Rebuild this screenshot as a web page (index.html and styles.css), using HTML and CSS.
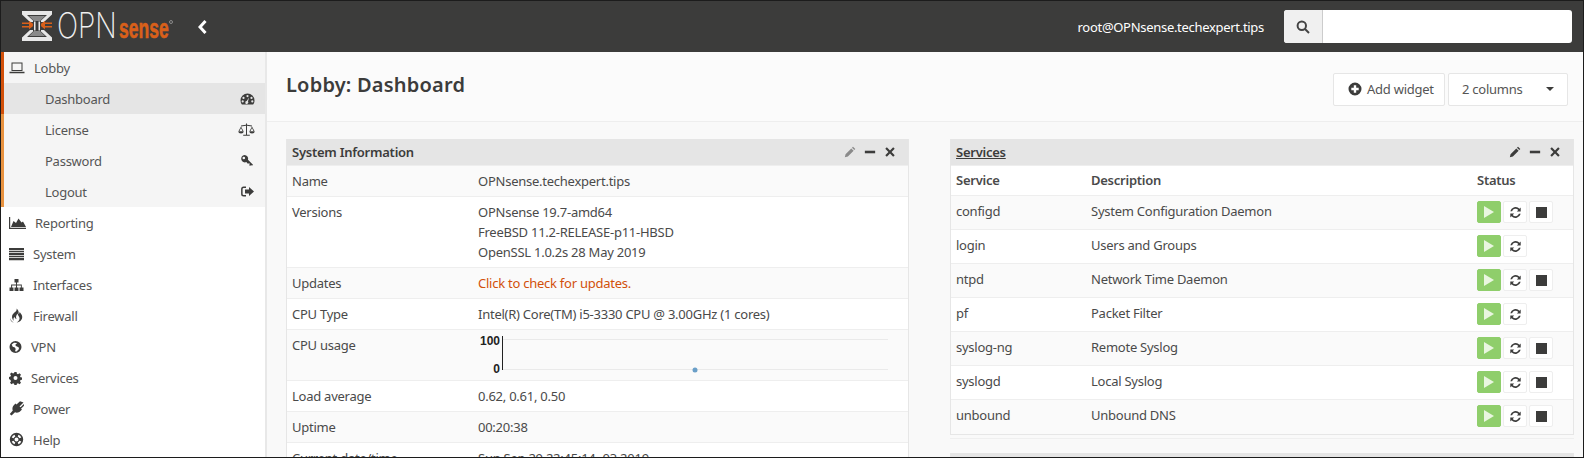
FILE: index.html
```html
<!DOCTYPE html>
<html lang="en">
<head>
<meta charset="utf-8">
<title>Lobby: Dashboard | OPNsense</title>
<link rel="stylesheet" href="styles.css">
</head>
<body>
<svg class="defs" width="0" height="0" aria-hidden="true">
  <defs>
    <symbol id="i-refresh" viewBox="0 0 14 14"><path d="M12.6 1.6v4.2H8.4l1.6-1.6A4 4 0 0 0 3.3 5.6H1.4A5.9 5.9 0 0 1 11.300 2.900zM1.400 12.400V8.200h4.200L4 9.800a4 4 0 0 0 6.700-1.400h1.900a5.900 5.900 0 0 1-9.900 2.700z"/></symbol>
    <symbol id="i-pencil" viewBox="0 0 14 14"><path d="M1 13l.8-3.500 6.700-6.700 2.700 2.700-6.700 6.700zM9.300 2l1.200-1.200 2.700 2.700L12 4.700z"/></symbol>
    <symbol id="i-minus" viewBox="0 0 14 14"><rect x="1" y="5.500" width="12" height="3"/></symbol>
    <symbol id="i-times" viewBox="0 0 14 14"><path d="M3.300 1.500L7 5.200l3.700-3.700 1.800 1.800L8.800 7l3.700 3.700-1.800 1.800L7 8.800l-3.700 3.700-1.800-1.800L5.200 7 1.500 3.300z"/></symbol>
  </defs>
</svg>
<div class="app">
  <header class="navbar">
    <a class="brand" href="#">
      <svg class="logo" width="154" height="44" viewBox="0 0 154 44">
        <path class="logo-w" d="M1 6h30v3.500L23 17h-3v-1.500l6-5.500H6l6 5.500V17H9L1 9.500zM1 36h30v-3.500L23 25h-3v1.500l6 5.500H6l6-5.500V25H9L1 32.500z"/>
        <path class="logo-g" d="M8 11h16l-5 5h-6zM8 31h16l-5-5h-6z"/>
        <path class="logo-w" d="M13 16.500h1.500v9H13zM17.500 16.500H19v9h-1.500z"/>
        <path class="logo-o" d="M1 17.500h7v-1.800l4 3-.1 2.600-3.900 3v-1.800H1v-1.500h7v-2H1zM31 17.500h-7v-1.800l-4 3 .1 2.600 3.900 3v-1.800h7v-1.500h-7v-2h7z"/>
        <text class="logo-opn" transform="translate(36 33) scale(.8 1)">OPN</text>
        <text class="logo-sense" transform="translate(98 33) scale(.65 1)">sense</text>
        <circle class="logo-tm" cx="150" cy="17" r="1.500"/>
      </svg>
    </a>
    <svg class="collapse" width="10" height="14" viewBox="0 0 10 14"><path d="M7.500 1L2 7l5.500 6" /></svg>
    <div class="nav-right">
      <span class="user">root@OPNsense.techexpert.tips</span>
      <div class="search">
        <span class="search-addon"><svg width="14" height="14" viewBox="0 0 14 14"><circle cx="5.800" cy="5.800" r="4.200"/><path d="M9 9l4 4"/></svg></span>
        <span class="search-field"></span>
      </div>
    </div>
  </header>
  <div class="layout">
    <nav class="sidebar">
      <div class="group">
        <a class="item top lobby"><svg class="ic" width="16" height="14" viewBox="0 0 16 14"><path d="M2.500 1.500h11v8.500h-11zM3.500 2.500v6.500h9V2.500zM.5 10.800h15V12.300H.5z" fill-rule="evenodd"/></svg>Lobby</a>
        <a class="item sub active">Dashboard<svg class="ic-r" width="15" height="14" viewBox="0 0 15 14"><path fill-rule="evenodd" d="M7.500 1.500a7 7 0 0 1 7 7c0 1.600-.5 3-1.400 4H1.900a6.900 6.900 0 0 1-1.400-4 7 7 0 0 1 7-7zM7.500 3a1.100 1.100 0 1 0 0 2.200 1.100 1.100 0 0 0 0-2.200zM3.500 4.800a1.100 1.100 0 1 0 0 2.200 1.100 1.100 0 0 0 0-2.200zM11.500 4.800a1.100 1.100 0 1 0 0 2.200 1.100 1.100 0 0 0 0-2.200zM2.700 8.300a1.100 1.100 0 1 0 0 2.200 1.100 1.100 0 0 0 0-2.200zM12.300 8.300a1.100 1.100 0 1 0 0 2.200 1.100 1.100 0 0 0 0-2.200zM9 5.500L6.700 9a1.500 1.500 0 1 0 1.300.6z"/></svg></a>
        <a class="item sub">License<svg class="ic-r" width="17" height="14" viewBox="0 0 17 14"><path d="M8 .5h1v1.300l5 .8v.8l-5-.7v9h2.800v1H5.200v-1H8v-9l-5 .7v-.8l5-.8z"/><path d="M3 3.500L.3 8.500h5.400zM3 5.100l-1.500 2.900h3zM14 3.500l-2.700 5h5.400zM14 5.100l-1.500 2.900h3z" fill-rule="evenodd"/><path d="M.3 8.500a2.700 2 0 0 0 5.400 0zM11.300 8.500a2.700 2 0 0 0 5.400 0z"/></svg></a>
        <a class="item sub">Password<svg class="ic-r short" width="14" height="14" viewBox="0 0 14 14"><path fill-rule="evenodd" d="M4.500 1a3.700 3.700 0 0 1 3.500 4.800l5 5-1 1-1-.8-.9.900-1-1 .8-.8-1-1-.8.800-1.800-1.800A3.700 3.700 0 1 1 4.500 1zM3.800 2.700a1.300 1.300 0 1 0 0 2.600 1.300 1.300 0 0 0 0-2.600z"/></svg></a>
        <a class="item sub">Logout<svg class="ic-r short" width="13" height="13" viewBox="0 0 13 13"><path d="M5 1.500v1.500H2.600a1 1 0 0 0-1 1v5a1 1 0 0 0 1 1H5v1.500H2.600A2.500 2.500 0 0 1 .1 9V4a2.500 2.500 0 0 1 2.500-2.500zM8 2l5 4.500L8 11V8.500H4v-4h4z"/></svg></a>
      </div>
      <a class="item top"><svg class="ic" width="17" height="14" viewBox="0 0 17 14"><path d="M0 1h1.200v10.800H17V13H0z"/><path d="M2 11l2.500-6 2.500 2 2.500-4.500 3 4 1.500-1 3 5.500z"/></svg>Reporting</a>
      <a class="item top"><svg class="ic" width="15" height="14" viewBox="0 0 15 14"><path d="M0 1h15v2.200H0zM0 4h15v1.200H0zM0 6h15v2.200H0zM0 9h15v1.200H0zM0 11h15v2.200H0z"/></svg>System</a>
      <a class="item top"><svg class="ic" width="15" height="14" viewBox="0 0 15 14"><path d="M5.500 1h4v3.500H8V6.500h4.800v3h1.700V13h-4V9.500h1.400V7.500H8V9.500h1.500V13h-4V9.500H7V7.500H3.100v2h1.400V13h-4V9.500h1.600v-3H7V4.500H5.500z"/></svg>Interfaces</a>
      <a class="item top"><svg class="ic" width="15" height="15" viewBox="0 0 15 15"><path d="M7.500.5C8.500 3 5 4.500 3.800 6.300 2.500 8.200 2.800 11 4.800 13c-.6-1.500-.5-3 .7-4.200.2 1.500 1 2 2 2.200C6.600 9 7 7 8.800 5.400 8.500 7.500 11 8.500 10.500 11c-.3 1.400-1.300 2.500-2.800 3.500 3.500-.5 5.800-3 5.500-6-.2-2-1.800-3.500-2.700-4.500.1 1-.2 1.800-1 2.300C10 4 9.500 2 7.500.5zM1 10c.2 2.200 1.500 4 3.800 4.800C3 13.500 1.800 12 1 10z"/></svg>Firewall</a>
      <a class="item top"><svg class="ic" width="13" height="14" viewBox="0 0 13 14"><path d="M6.500 1a6 6 0 1 1 0 12 6 6 0 0 1 0-12zM5 2.700L2.700 4.500l1 2.300 2.200.7.800 1.500-.7 2.300 1.500.3 2.500-2.600-.4-1.700-2.700-1.200-.6-1.400 1.200-.9L8 2.900z" fill-rule="evenodd"/></svg>VPN</a>
      <a class="item top"><svg class="ic" width="13" height="14" viewBox="0 0 13 14"><path fill-rule="evenodd" d="M5.400 1h2.200l.3 1.700 1.100.5 1.500-1 1.500 1.500-1 1.500.5 1.100 1.500.3v2.200l-1.500.3-.5 1.100 1 1.500-1.500 1.500-1.500-1-1.100.5-.3 1.500H5.400l-.3-1.500-1.100-.5-1.500 1-1.500-1.500 1-1.500-.5-1.100L0 8.100V5.900l1.500-.3.500-1.100-1-1.500 1.500-1.500 1.500 1 1.100-.5zM6.500 5a2 2 0 1 0 0 4 2 2 0 0 0 0-4z"/></svg>Services</a>
      <a class="item top"><svg class="ic" width="15" height="15" viewBox="0 0 15 15"><path d="M14.500 1.500L10.500 5.400l1.100.9L14.800 3l.2 1.700-3 3 1 .9-1.500 1.500c-1.500 1.600-3.800 2-5.500 1.200L2.500 14.500.8 13l3-3.500C3 7.800 3.400 5.500 5 4l1.500-1.500 1 1L11 .2z"/></svg>Power</a>
      <a class="item top"><svg class="ic" width="15" height="15" viewBox="0 0 15 15"><path fill-rule="evenodd" d="M7.500.8a6.700 6.700 0 1 1 0 13.400 6.700 6.700 0 0 1 0-13.400zM5.500 2.700A5.300 5.300 0 0 0 2.700 5.500l1.900.8a3.200 3.200 0 0 1 1.700-1.700zM9.500 2.700l-.8 1.900a3.200 3.200 0 0 1 1.700 1.700l1.900-.8a5.300 5.300 0 0 0-2.800-2.800zM7.500 5.500a2 2 0 1 0 0 4 2 2 0 0 0 0-4zM2.700 9.500a5.300 5.300 0 0 0 2.800 2.800l.8-1.900a3.200 3.200 0 0 1-1.700-1.700zM12.300 9.500l-1.900-.8a3.200 3.200 0 0 1-1.700 1.700l.8 1.900a5.300 5.300 0 0 0 2.800-2.800z"/></svg>Help</a>
    </nav>
    <main class="main">
      <div class="titlebar">
        <h1 class="page-title">Lobby: Dashboard</h1>
        <div class="actions">
          <button class="btn add"><svg width="14" height="14" viewBox="0 0 14 14"><path fill-rule="evenodd" d="M7 .5a6.500 6.500 0 1 1 0 13 6.500 6.500 0 0 1 0-13zM5.800 3.300v2.500H3.300v2.400h2.500v2.500h2.400V8.200h2.500V5.800H8.200V3.300z"/></svg>Add widget</button>
          <button class="btn columns">2 columns<svg width="8" height="4" viewBox="0 0 8 4"><path d="M0 0h8L4 4z"/></svg></button>
        </div>
      </div>
      <div class="content">
        <div class="column">
          <section class="widget">
            <div class="widget-head"><span class="widget-title">System Information</span><span class="tools"><svg><use href="#i-pencil" class="muted"/></svg><svg><use href="#i-minus"/></svg><svg><use href="#i-times"/></svg></span></div>
            <table class="info">
              <tr><td class="k">Name</td><td>OPNsense.techexpert.tips</td></tr>
              <tr><td class="k">Versions</td><td>OPNsense 19.7-amd64<br>FreeBSD 11.2-RELEASE-p11-HBSD<br>OpenSSL 1.0.2s 28 May 2019</td></tr>
              <tr><td class="k">Updates</td><td><a class="update-link">Click to check for updates.</a></td></tr>
              <tr><td class="k">CPU Type</td><td>Intel(R) Core(TM) i5-3330 CPU @ 3.00GHz (1 cores)</td></tr>
              <tr><td class="k">CPU usage</td><td class="chart-cell"><svg class="chart" width="412" height="40" viewBox="0 0 412 40">
                <text class="axis" x="22" y="10" text-anchor="end">100</text>
                <text class="axis" x="22" y="38" text-anchor="end">0</text>
                <path class="grid" d="M24 4.500h386M24 34.500h386"/>
                <path class="yaxis" d="M24.500 1v34"/>
                <circle class="dot" cx="217" cy="35" r="2.500"/>
              </svg></td></tr>
              <tr><td class="k">Load average</td><td>0.62, 0.61, 0.50</td></tr>
              <tr><td class="k">Uptime</td><td>00:20:38</td></tr>
              <tr><td class="k">Current date/time</td><td>Sun Sep 29 22:45:14 -03 2019</td></tr>
            </table>
          </section>
        </div>
        <div class="column">
          <section class="widget services">
            <div class="widget-head"><span class="widget-title link">Services</span><span class="tools"><svg><use href="#i-pencil"/></svg><svg><use href="#i-minus"/></svg><svg><use href="#i-times"/></svg></span></div>
            <table class="svc">
              <thead><tr><th class="c1">Service</th><th class="c2">Description</th><th>Status</th></tr></thead>
              <tbody>
                <tr><td>configd</td><td>System Configuration Daemon</td><td class="st"><span class="sb play"><i></i></span><span class="sb"><svg><use href="#i-refresh"/></svg></span><span class="sb"><b></b></span></td></tr>
                <tr><td>login</td><td>Users and Groups</td><td class="st"><span class="sb play"><i></i></span><span class="sb"><svg><use href="#i-refresh"/></svg></span></td></tr>
                <tr><td>ntpd</td><td>Network Time Daemon</td><td class="st"><span class="sb play"><i></i></span><span class="sb"><svg><use href="#i-refresh"/></svg></span><span class="sb"><b></b></span></td></tr>
                <tr><td>pf</td><td>Packet Filter</td><td class="st"><span class="sb play"><i></i></span><span class="sb"><svg><use href="#i-refresh"/></svg></span></td></tr>
                <tr><td>syslog-ng</td><td>Remote Syslog</td><td class="st"><span class="sb play"><i></i></span><span class="sb"><svg><use href="#i-refresh"/></svg></span><span class="sb"><b></b></span></td></tr>
                <tr><td>syslogd</td><td>Local Syslog</td><td class="st"><span class="sb play"><i></i></span><span class="sb"><svg><use href="#i-refresh"/></svg></span><span class="sb"><b></b></span></td></tr>
                <tr><td>unbound</td><td>Unbound DNS</td><td class="st"><span class="sb play"><i></i></span><span class="sb"><svg><use href="#i-refresh"/></svg></span><span class="sb"><b></b></span></td></tr>
              </tbody>
            </table>
          </section>
          <div class="gutter"></div>
          <section class="widget next"><div class="widget-head"></div></section>
        </div>
      </div>
    </main>
  </div>
</div>
</body>
</html>
```

FILE: styles.css
```css
* { box-sizing: border-box; }
html, body { margin: 0; height: 100%; overflow: hidden; }
body { font: 13px/20px "Noto Sans", "Lato", sans-serif; letter-spacing: -0.25px; color: #4a4a4a; background: #fff; }
.defs { position: absolute; }

.app { height: 458px; border: 1px solid #1c1c1c; display: flex; flex-direction: column; overflow: hidden; }

.navbar { height: 51px; flex: none; background: #3c3c3b; display: flex; align-items: center; }
.brand { display: block; margin-left: 20px; height: 44px; }
.logo { display: block; }
.logo-w { fill: #e8e8e8; }
.logo-g { fill: #8a8a8a; }
.logo-o { fill: #d9601a; }
.logo-tm { fill: none; stroke: #aaa; stroke-width: .7; }
.logo-opn { font: 200 35px "Inter", sans-serif; letter-spacing: 0; fill: #f0f0f0; }
.logo-sense { font: 700 27px "Liberation Sans", sans-serif; letter-spacing: 0; fill: #d9601a; stroke: #d9601a; stroke-width: .6; }
.collapse { margin-left: 23px; fill: none; stroke: #fff; stroke-width: 3; }
.nav-right { margin-left: auto; display: flex; align-items: center; gap: 20px; padding-right: 11px; }
.user { color: #fff; letter-spacing: -0.3px; }
.search { width: 288px; height: 33px; display: flex; border-radius: 3px; overflow: hidden; background: #fff; }
.search-addon { width: 39px; background: #f0f0f0; border-right: 1px solid #ccc; display: flex; align-items: center; justify-content: center; }
.search-addon svg { fill: none; stroke: #444; stroke-width: 2; }
.search-field { flex: 1; }

.layout { flex: 1; min-height: 0; display: flex; }
.sidebar { width: 266px; flex: none; background: #fff; border-right: 2px solid #e8e8e8; }
.group { background: #f5f5f5; }
.item { display: flex; align-items: center; height: 31px; color: #555; border-left: 3px solid transparent; }
.ic { margin: 0 9px 0 5px; fill: #3c3c3b; flex: none; }
.group .item { border-left-color: #e8923f; }
.group .lobby, .group .active { border-left-color: #d2500a; }
.sub { padding-left: 41px; padding-right: 10px; justify-content: space-between; }
.active { background: #e5e5e5; }
.ic-r { fill: #3c3c3b; flex: none; }
.ic-r.short { margin-right: 1px; }

.main { flex: 1; min-width: 0; background: #f9f9f9; }
.titlebar { height: 70px; background: #fbfbfb; border-bottom: 1px solid #eee; display: flex; justify-content: space-between; align-items: center; padding: 0 15px 0 19px; }
.page-title { margin: 0 0 3px; font-size: 20px; line-height: 28px; font-weight: 600; letter-spacing: 0.2px; color: #3c3c3b; }
.actions { display: flex; gap: 3px; margin-top: 5px; }
.btn { height: 33px; font: inherit; letter-spacing: inherit; color: #555; background: #fff; border: 1px solid #e6e6e6; border-radius: 2px; display: flex; align-items: center; }
.btn svg { fill: #3c3c3b; }
.add { width: 112px; padding: 0 0 0 14px; gap: 5px; }
.columns { width: 120px; padding: 0 13px; justify-content: space-between; }

.content { display: grid; grid-template-columns: 623px 624px; column-gap: 41px; padding: 17px 0 0 19px; }
.widget { background: #fff; border: 1px solid #e6e6e6; border-top: 0; }
.widget-head { height: 26px; background: #e5e5e5; display: flex; align-items: center; justify-content: space-between; padding: 0 5px; font-weight: 600; color: #3c3c3b; }
.link { text-decoration: underline; }
.tools { display: flex; gap: 8px; margin-right: 7px; }
.tools svg { width: 12px; height: 12px; fill: #3c3c3b; display: block; }
.tools use.muted { fill: #8a8a8a; }

table { border-collapse: collapse; width: 100%; table-layout: fixed; }
td, th { padding: 5px; text-align: left; vertical-align: top; border-top: 1px solid #eee; }
.info td { height: 31px; }
.info .k { width: 186px; }
.info tr:nth-child(odd) td { background: #fafafa; }
.update-link { color: #d2500a; }
.chart-cell { padding-bottom: 5px; }
.chart { display: block; }
.axis { font: 700 12px "Liberation Sans", sans-serif; letter-spacing: 0; fill: #222; }
.grid { stroke: #eaeaea; fill: none; }
.yaxis { stroke: #222; }
.dot { fill: #6a9fc8; }

.svc .c1 { width: 135px; }
.svc .c2 { width: 386px; }
.svc th { height: 29px; padding-top: 4px; font-weight: 600; color: #4a4a4a; }
.svc td { height: 34px; padding-top: 5px; }
.svc tbody tr:nth-child(odd) td { background: #fafafa; }
.svc .st { padding: 5px 0 0 5px; white-space: nowrap; }
.sb { display: inline-flex; align-items: center; justify-content: center; width: 24px; height: 22px; margin-right: 2px; background: #fff; border: 1px solid #eee; border-radius: 2px; vertical-align: top; }
.sb svg { width: 13px; height: 13px; fill: #3c3c3b; display: block; }
.sb b { width: 11px; height: 11px; background: #3c3c3b; display: block; }
.play { background: #8fce6b; border-color: #8fce6b; }
.play i { display: block; width: 0; height: 0; border-left: 10px solid #e9f6e0; border-top: 6px solid transparent; border-bottom: 6px solid transparent; }

.gutter { height: 4px; border-bottom: 1px solid #efefef; margin-bottom: 14px; }
.next { border-bottom: 0; }
```
